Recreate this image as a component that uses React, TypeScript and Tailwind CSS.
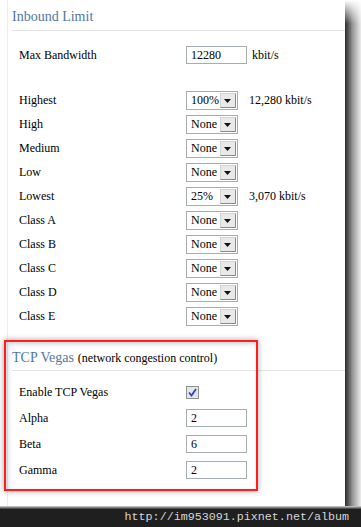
import React from "react";

function Select({ value }: { value: string }) {
  return (
    <div className="flex h-[19px] w-[52px] items-center border border-[#a5acb2] bg-white">
      <span className="flex-1 pl-[4px] text-[12px] leading-none text-black">{value}</span>
      <span className="mr-[1px] flex h-[15px] w-[16px] items-center justify-center border border-[#d4d4d4] border-r-[#8a8a8a] border-b-[#8a8a8a] bg-[#e9e9e9]">
        <svg width="8" height="5" viewBox="0 0 8 5" className="mt-[3px]">
          <path d="M0 0h7L3.5 4z" fill="#111" />
        </svg>
      </span>
    </div>
  );
}

function TextBox({ value }: { value: string }) {
  return (
    <div className="flex h-[18px] w-[61px] items-center border border-[#a5acb2] bg-white pl-[4px] text-[12px] leading-none text-black">
      {value}
    </div>
  );
}

function Row({ label, h = 24, children }: { label: string; h?: number; children: React.ReactNode }) {
  return (
    <div className={`flex items-center pl-[11px] ${h === 24 ? "h-[24px]" : "h-[26px]"}`}>
      <span className="w-[167px] text-[12px] leading-none text-black">{label}</span>
      {children}
    </div>
  );
}

const classes: { label: string; value: string; note?: string }[] = [
  { label: "Highest", value: "100%", note: "12,280 kbit/s" },
  { label: "High", value: "None" },
  { label: "Medium", value: "None" },
  { label: "Low", value: "None" },
  { label: "Lowest", value: "25%", note: "3,070 kbit/s" },
  { label: "Class A", value: "None" },
  { label: "Class B", value: "None" },
  { label: "Class C", value: "None" },
  { label: "Class D", value: "None" },
  { label: "Class E", value: "None" },
];

export default function App() {
  return (
    <div className="relative flex h-[527px] w-[361px] flex-col overflow-hidden bg-white font-['Liberation_Serif','Tinos','Times_New_Roman','DejaVu_Serif',serif]">
      <div className="flex flex-1">
        {/* page */}
        <div className="w-[345px] bg-white">
          <div className="ml-[7px] h-full border-l border-[#ececec]">
            <div className="ml-[4px] h-[31px] border-b border-[#e4e4e4] pt-[9px] text-[14px] leading-[16px] text-[#4f77a3]">
              Inbound Limit
            </div>

            <div className="mt-[12px]">
              <Row label="Max Bandwidth">
                <TextBox value="12280" />
                <span className="ml-[5px] text-[12px] leading-none">kbit/s</span>
              </Row>
            </div>

            <div className="mt-[21px]">
              {classes.map((c) => (
                <Row key={c.label} label={c.label}>
                  <Select value={c.value} />
                  {c.note && <span className="ml-[11px] text-[12px] leading-none">{c.note}</span>}
                </Row>
              ))}
            </div>

            <div className="ml-[4px] h-[43px] border-b border-[#e4e4e4] pt-[21px] leading-[16px]">
              <span className="text-[14px] text-[#4f77a3]">TCP Vegas</span>{" "}
              <span className="text-[12px] text-black">(network congestion control)</span>
            </div>

            <div className="mt-[8px]">
              <Row label="Enable TCP Vegas" h={26}>
                <div className="flex h-[13px] w-[13px] items-center justify-center border border-[#8e8f8f] bg-[#e3e6ee]">
                  <svg width="9" height="9" viewBox="0 0 9 9">
                    <path d="M1 4.5l2.5 3L8 1" fill="none" stroke="#2a4cae" strokeWidth="1.8" />
                  </svg>
                </div>
              </Row>
              <Row label="Alpha" h={26}>
                <TextBox value="2" />
              </Row>
              <Row label="Beta" h={26}>
                <TextBox value="6" />
              </Row>
              <Row label="Gamma" h={26}>
                <TextBox value="2" />
              </Row>
            </div>
          </div>
        </div>

        {/* right drop shadow */}
        <div className="relative w-[16px] bg-linear-to-r from-[#2c2c2c] via-[#9c9c9c] to-[#ededed]">
          <div className="absolute inset-x-0 top-0 h-[24px] bg-linear-to-b from-white to-transparent" />
        </div>
      </div>

      {/* bottom band */}
      <div className="h-[3px] bg-linear-to-b from-[#d8d8d8] to-[#3a3a3a]" />
      <div className="flex h-[18px] items-center justify-end bg-[#1f1f1f] pr-[12px] font-['Liberation_Mono','Courier_New',monospace] text-[11.7px] leading-none text-[#d6d6d6]">
        http://im953091.pixnet.net/album
      </div>

      {/* red annotation box */}
      <div className="pointer-events-none absolute left-[4px] top-[340px] h-[151px] w-[254px] border-2 border-[#ff1e1e] shadow-[0_0_6px_rgba(0,0,0,0.35),inset_2px_2px_5px_rgba(0,0,0,0.18)]" />
    </div>
  );
}
